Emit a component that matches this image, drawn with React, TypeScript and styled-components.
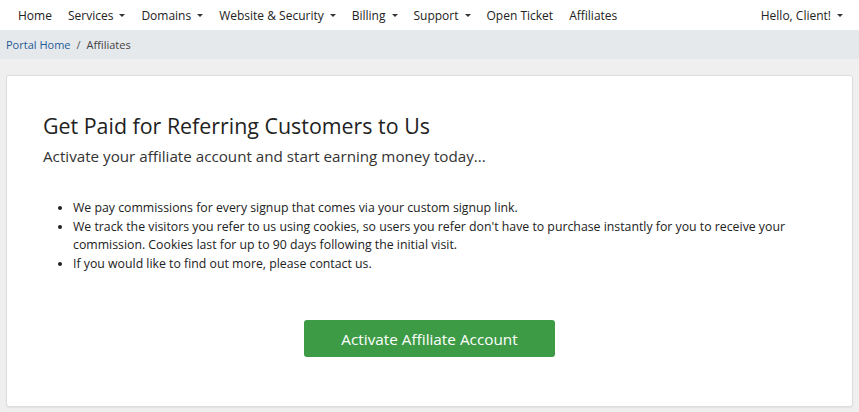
import styled, { createGlobalStyle } from "styled-components";

const GlobalStyle = createGlobalStyle`
  html, body {
    margin: 0;
    padding: 0;
    background: #efefef;
    font-family: "Open Sans", "Liberation Sans", sans-serif;
    color: #333;
  }
  * { box-sizing: border-box; }
`;

const menu = [
  { label: "Home", caret: false },
  { label: "Services", caret: true },
  { label: "Domains", caret: true },
  { label: "Website & Security", caret: true },
  { label: "Billing", caret: true },
  { label: "Support", caret: true },
  { label: "Open Ticket", caret: false },
  { label: "Affiliates", caret: false },
];

const bullets = [
  "We pay commissions for every signup that comes via your custom signup link.",
  "We track the visitors you refer to us using cookies, so users you refer don't have to purchase instantly for you to receive your commission. Cookies last for up to 90 days following the initial visit.",
  "If you would like to find out more, please contact us.",
];

function App() {
  return (
    <>
      <GlobalStyle />
      <Navbar>
        <NavList>
          {menu.map((m) => (
            <NavItem key={m.label}>
              {m.label}
              {m.caret && <Caret />}
            </NavItem>
          ))}
        </NavList>
        <NavItem>
          Hello, Client!
          <Caret />
        </NavItem>
      </Navbar>
      <Breadcrumb>
        <CrumbLink>Portal Home</CrumbLink>
        <Divider>/</Divider>
        <span>Affiliates</span>
      </Breadcrumb>
      <Main>
        <Card>
          <Title>Get Paid for Referring Customers to Us</Title>
          <Lead>Activate your affiliate account and start earning money today...</Lead>
          <List>
            {bullets.map((b) => (
              <li key={b}>{b}</li>
            ))}
          </List>
          <Actions>
            <ActivateButton>Activate Affiliate Account</ActivateButton>
          </Actions>
        </Card>
      </Main>
    </>
  );
}

const Navbar = styled.nav`
  display: flex;
  justify-content: space-between;
  align-items: center;
  height: 30px;
  padding: 0 8px 0 10px;
  background: #fff;
  font-size: 12px;
  color: #222;
`;

const NavList = styled.div`
  display: flex;
  align-items: center;
`;

const NavItem = styled.div`
  display: flex;
  align-items: center;
  padding: 0 8px;
  white-space: nowrap;
`;

const Caret = styled.span`
  display: inline-block;
  margin-left: 6px;
  width: 0;
  height: 0;
  border-left: 3px solid transparent;
  border-right: 3px solid transparent;
  border-top: 3px solid #333;
`;

const Breadcrumb = styled.div`
  display: flex;
  align-items: center;
  height: 29px;
  padding: 0 6px;
  background: #e6e9ec;
  font-size: 11px;
  color: #444;
`;

const CrumbLink = styled.a`
  color: #1f5a96;
  text-decoration: none;
`;

const Divider = styled.span`
  padding: 0 6px;
  color: #555;
`;

const Main = styled.main`
  padding: 16px 6px 5px 6px;
`;

const Card = styled.section`
  background: #fff;
  border: 1px solid #dcdcdc;
  border-radius: 3px;
  box-shadow: 0 1px 1px rgba(0, 0, 0, 0.05);
  padding: 36px 36px 48px 36px;
  min-height: 332px;
`;

const Title = styled.h1`
  margin: 0;
  font-size: 21.4px;
  font-weight: 400;
  line-height: 28px;
  color: #222;
`;

const Lead = styled.p`
  margin: 5px 0 0;
  font-size: 15.2px;
  line-height: 22px;
  font-weight: 400;
  color: #333;
`;

const List = styled.ul`
  margin: 32px 0 0;
  padding-left: 30px;
  font-size: 12.3px;
  line-height: 18.6px;
  color: #222;
`;

const Actions = styled.div`
  display: flex;
  justify-content: center;
  margin-top: 47px;
`;

const ActivateButton = styled.button`
  width: 251px;
  height: 37px;
  border: none;
  border-radius: 3px;
  background: #3d9b45;
  color: #fff;
  font-family: "Open Sans", "Liberation Sans", sans-serif;
  font-size: 15.3px;
  cursor: pointer;
`;

export default App;
